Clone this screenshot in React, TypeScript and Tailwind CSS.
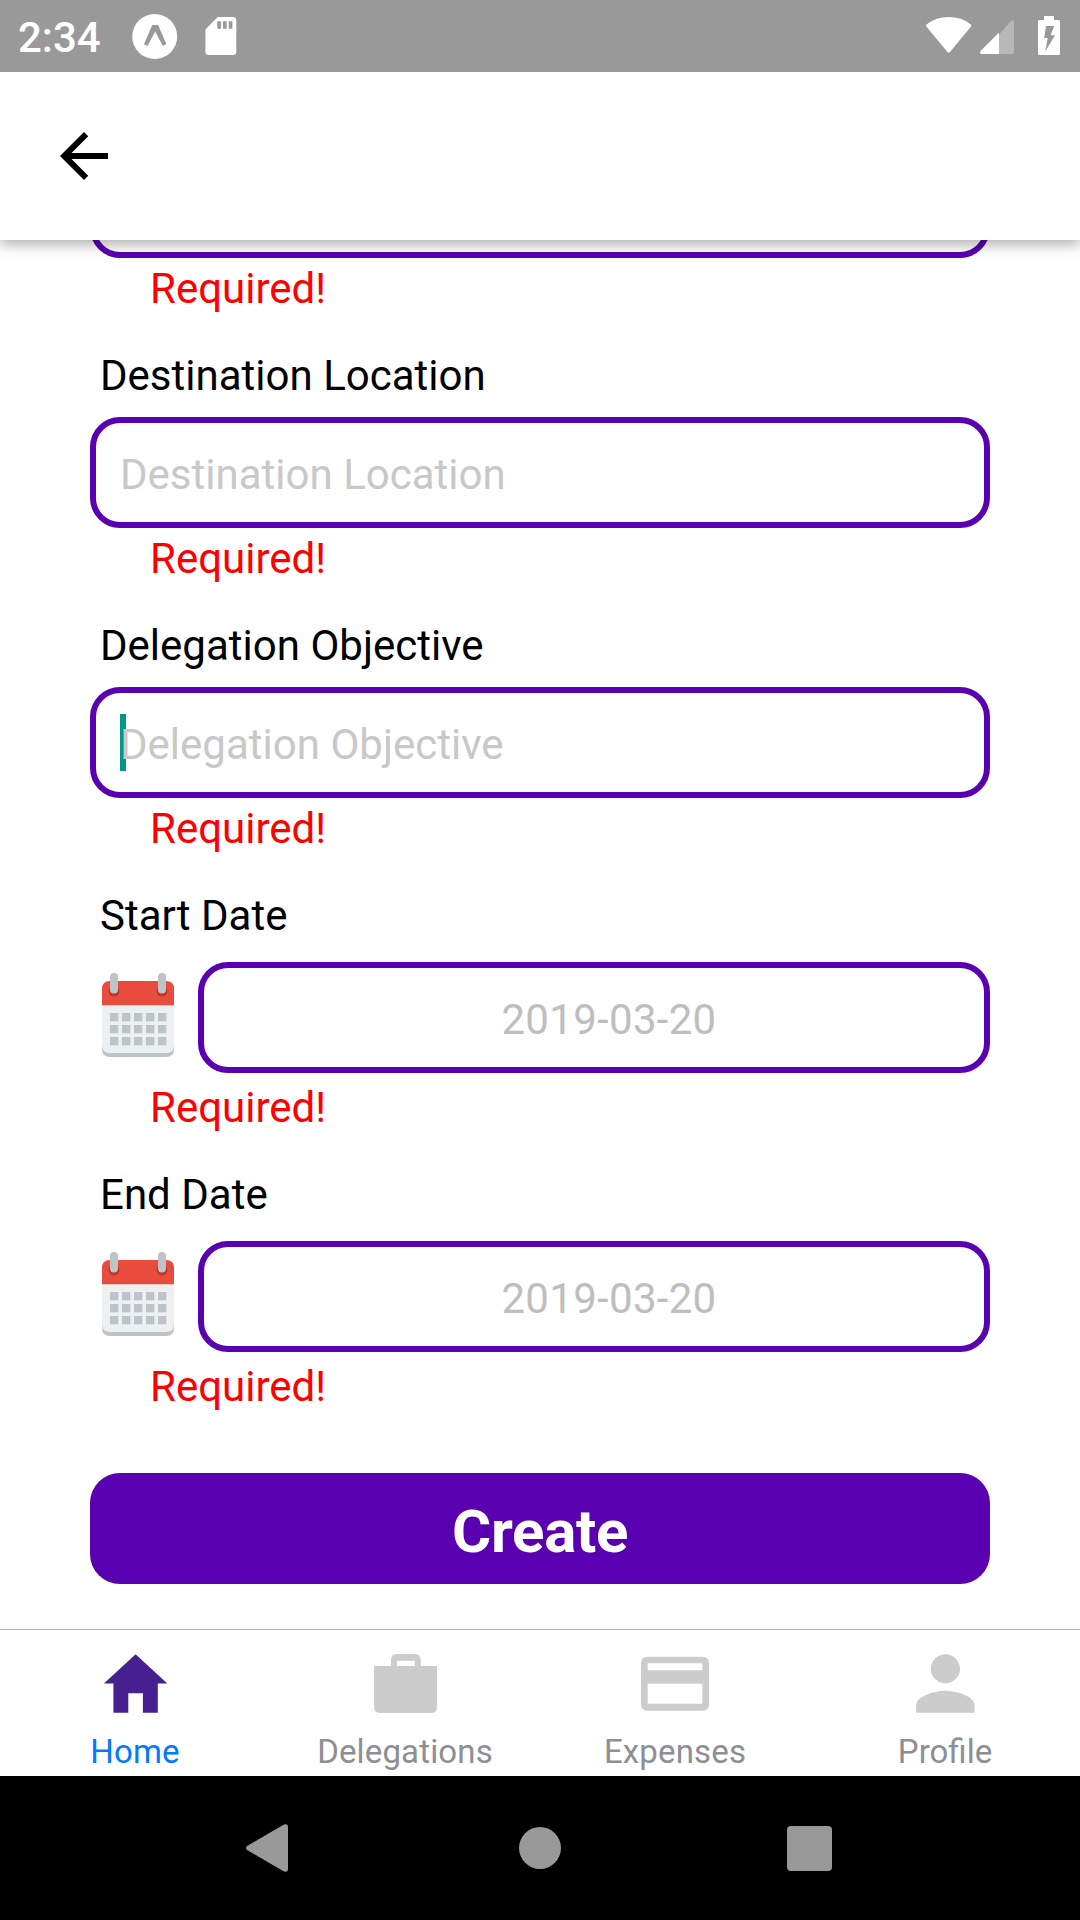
import React from "react";

function StatusBar() {
  return (
    <div className="relative z-20 flex h-[72px] shrink-0 items-center justify-between bg-[#999999] pl-[18px] text-white">
      <div className="flex h-full items-center">
        <span className="w-[114px] pt-[3px] text-[42px] leading-[50px] font-medium">2:34</span>
        <svg className="h-[72px] w-[120px]" viewBox="132 0 120 72" fill="#fff">
          <circle cx="154.7" cy="36.5" r="22.5" />
          <path
            d="M153 25h4.4q.8 0 1.2.9L166.3 43.9l-3.4 2.2-7.7-14.6-7.8 14.6-3.4-1.9L151.8 25.900q.4-.9 1.200-.9z"
            fill="#999"
          />
          <path
            fillRule="evenodd"
            d="M217.700 17H233q3.300 0 3.300 3.300V51.700q0 3.300-3.300 3.300H208.700q-3.300 0-3.300-3.300V29.500zM217.300 21.300v7.400h3.700v-7.400zM223 21.300v7.400h3.700v-7.400zM228.700 21.300v7.400h3.700v-7.400z"
          />
        </svg>
      </div>
      <svg className="h-[72px] w-[160px]" viewBox="920 0 160 72" fill="#fff">
        <path d="M926.300 26.500q-.9-1.400.5-2.300Q936 17 948.700 17t21.800 7.200q1.400.9.5 2.300L950 52q-1.300 1.400-2.600 0z" />
        <path d="M1014 22v30q0 2-2 2h-13V34.500l12-13.400q3-2.500 3 .9z" fill="#b8b8b8" />
        <path d="M999 32.500V54h-17.500q-2.500-.6-.9-3z" />
        <path
          fillRule="evenodd"
          d="M1044 16h10v4h4.500q1.500 0 1.500 1.500v32q0 1.500-1.500 1.500h-19q-1.500 0-1.500-1.500v-32q0-1.500 1.500-1.500h4.500zM1046 26l-1.800 12h3.500l-2.400 13.500L1055 35.300h-4.500l3.700-9.300z"
        />
      </svg>
    </div>
  );
}

function Header() {
  return (
    <header className="relative z-10 flex h-[168px] shrink-0 items-center bg-white pl-12 shadow-[0_5px_12px_rgba(0,0,0,0.3)]">
      <svg className="h-[72px] w-[72px]" viewBox="0 0 24 24">
        <path d="M20 11H7.830l5.590-5.590L12 4l-8 8 8 8 1.410-1.410L7.830 13H20v-2z" />
      </svg>
    </header>
  );
}

function Label({ children }: { children: string }) {
  return <div className="h-[50px] pl-[10px] text-[42px] leading-[52px] tracking-[0.01px] text-black">{children}</div>;
}

function ErrorText({ date = false }: { date?: boolean }) {
  return (
    <div className={(date ? "mt-[9px]" : "mt-[5px]") + " mb-[37px] h-[50px] pl-[60px] text-[42px] leading-[52px] text-[#ff0000]"}>
      Required!
    </div>
  );
}

function TextField({ label, focused = false }: { label: string; focused?: boolean }) {
  return (
    <div>
      <Label>{label}</Label>
      <div className="relative mt-[17px] flex h-[111px] items-center rounded-[30px] border-[6px] border-[#5900b0] pl-[24px]">
        {focused && <span className="absolute top-[21px] left-[24px] h-[57px] w-[6px] bg-[#009688]" />}
        <span className="relative pt-[5px] text-[42px] leading-[50px] tracking-[0.01px] text-[#c8c8c8]">{label}</span>
      </div>
      <ErrorText />
    </div>
  );
}

function Calendar() {
  return (
    <svg className="h-[84px] w-[72px]" viewBox="0 0 72 84">
      <path d="M0 68h72v8q0 8-8 8H8q-8 0-8-8z" fill="#bdc3c7" />
      <path d="M0 30h72v42q0 8-8 8H8q-8 0-8-8z" fill="#ecf0f1" />
      <path d="M0 32.300V16q0-8 8-8h56q8 0 8 8v16.300z" fill="#e74c3c" />
      {[12, 60].map((x) => (
        <g key={x}>
          <circle cx={x} cy="18" r="5.500" fill="#c0392b" />
          <rect x={x - 4} y="0" width="8" height="20.500" rx="4" fill="#bdc3c7" />
        </g>
      ))}
      {[40, 52, 64].map((y) =>
        [8, 20, 32, 44, 56].map((x) => <rect key={x + "-" + y} x={x} y={y} width="8.300" height="8.300" fill="#bdc3c7" />)
      )}
    </svg>
  );
}

function DateField({ label }: { label: string }) {
  return (
    <div>
      <Label>{label}</Label>
      <div className="mt-[22px] flex h-[111px] pl-3">
        <div className="mr-6 pt-[11px]">
          <Calendar />
        </div>
        <div className="flex flex-1 items-center justify-center rounded-[30px] border-[6px] border-[#5900b0] pl-[30px]">
          <span className="pt-[5px] text-[42px] leading-[50px] tracking-[0.3px] text-[#bebebe]">2019-03-20</span>
        </div>
      </div>
      <ErrorText date />
    </div>
  );
}

const tabs = [
  {
    name: "Home",
    icon: <path transform="translate(.6 .5) scale(.15234)" fill="#47208f" d="M208 448V320h96v128h97.600V256H464L256 64 48 256h62.400v192z" />,
  },
  {
    name: "Delegations",
    icon: (
      <path
        fillRule="evenodd"
        d="M8 22H25V16q0-6 6-6H48.700q6 0 6 6V22H71V63q0 6-6 6H14q-6 0-6-6zM31 16.700V22H48.700V16.700z"
      />
    ),
  },
  {
    name: "Expenses",
    icon: (
      <path
        fillRule="evenodd"
        d="M11.500 12.700h55q6.500 0 6.500 6.500v41q0 6.500-6.500 6.500h-55q-6.500 0-6.500-6.500v-41q0-6.500 6.500-6.500zM11.700 19.300v7h54.600v-7zM11.700 39.700v20h54.600v-20z"
      />
    ),
  },
  {
    name: "Profile",
    icon: (
      <path
        transform="translate(.4 .5) scale(.15234)"
        d="M256 256c52.805 0 96-43.201 96-96s-43.195-96-96-96-96 43.201-96 96 43.195 96 96 96zm0 48c-63.598 0-192 32.402-192 96v48h384v-48c0-63.598-128.402-96-192-96z"
      />
    ),
  },
];

function TabBar() {
  return (
    <nav className="grid h-[147px] shrink-0 grid-cols-4 border-t border-[#b2b2b2] bg-white">
      {tabs.map((tab, i) => (
        <div key={tab.name} className="flex flex-col items-center pt-[14px]">
          <svg className="h-[78px] w-[78px]" viewBox="0 0 78 78" fill="#ccc">
            {tab.icon}
          </svg>
          <span
            className={
              (i === 0 ? "text-[#007aff]" : "text-[#8e8e93]") +
              (tab.name === "Profile" ? " tracking-normal" : " tracking-[0.15px]") +
              " mt-[10px] text-[33px] leading-[40px]"
            }
          >
            {tab.name}
          </span>
        </div>
      ))}
    </nav>
  );
}

function SystemNav() {
  return (
    <div className="flex h-[144px] shrink-0 items-center bg-black pl-[246px]">
      <svg className="h-12 w-[43px]" viewBox="0 0 43 48" fill="#999">
        <path d="M1 22L37.500.700Q42 -1 42 3.500V44.500Q42 49 37.500 47.300L1 26Q-1 24 1 22z" />
      </svg>
      <div className="ml-[230px] h-[42px] w-[42px] rounded-full bg-[#999]" />
      <div className="ml-[226px] h-[45px] w-[45px] rounded-[4px] bg-[#999]" />
    </div>
  );
}

export default function App() {
  return (
    <div className="flex h-[1920px] w-[1080px] flex-col overflow-hidden bg-white font-['Roboto',sans-serif]">
      <StatusBar />
      <Header />
      <main className="min-h-0 flex-1 overflow-hidden px-[90px]">
        <div className="-mt-[93px] h-[111px] rounded-[30px] border-[6px] border-[#5900b0]" />
        <ErrorText />
        <TextField label="Destination Location" />
        <TextField label="Delegation Objective" focused />
        <DateField label="Start Date" />
        <DateField label="End Date" />
        <button className="mt-[62px] block h-[111px] w-full rounded-[30px] bg-[#5900b0] pt-[6px] text-[60px] leading-[70px] font-bold tracking-[-0.3px] text-white">
          Create
        </button>
      </main>
      <TabBar />
      <SystemNav />
    </div>
  );
}
